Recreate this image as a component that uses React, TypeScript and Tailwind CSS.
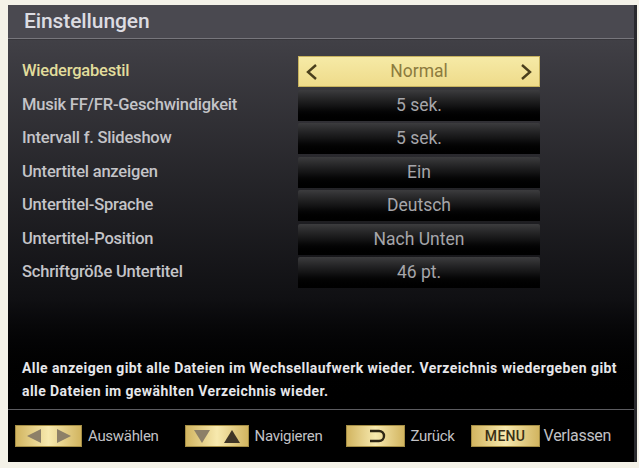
import React from "react";

const rows = [
  { label: "Wiedergabestil", value: "Normal", selected: true },
  { label: "Musik FF/FR-Geschwindigkeit", value: "5 sek." },
  { label: "Intervall f. Slideshow", value: "5 sek." },
  { label: "Untertitel anzeigen", value: "Ein" },
  { label: "Untertitel-Sprache", value: "Deutsch" },
  { label: "Untertitel-Position", value: "Nach Unten" },
  { label: "Schriftgröße Untertitel", value: "46 pt." },
];

const Key = ({ children, w }: { children: React.ReactNode; w: string }) => (
  <div
    className={`${w} h-[22px] flex items-center justify-center bg-gradient-to-r from-[#d2b560] via-[#f7e9ae] to-[#d2b560] border border-[#a48d45]`}
  >
    {children}
  </div>
);

export default function App() {
  return (
    <div
      className="w-[639px] h-[468px] bg-[#f4f2e8] pl-[8px] pt-[5px] overflow-hidden"
      style={{ fontFamily: "Roboto, 'Open Sans', sans-serif" }}
    >
      <div className="w-[629px] h-[457px] flex flex-col bg-black border-r-[3px] border-[#2a2a2e]">
        {/* Header */}
        <div className="h-[33px] bg-[#4a4950] flex items-center pl-[16px]">
          <span className="text-[21px] font-medium text-[#dcdce2] tracking-[-0.1px]">Einstellungen</span>
        </div>
        <div className="h-[1px] bg-[#77767c]" />
        <div className="h-[1px] bg-[#38373c]" />

        {/* Body */}
        <div className="flex-1 flex flex-col bg-gradient-to-b from-[#414046] via-[#101013] via-70% to-black">
          <div className="pt-[16px] flex flex-col gap-[2.5px]">
            {rows.map((r) => (
              <div key={r.label} className="flex items-center h-[31px]">
                <div
                  className={`w-[290px] pl-[14px] text-[16.5px] font-medium tracking-[-0.2px] ${
                    r.selected ? "text-[#e2dd9c]" : "text-[#c4c4c8]"
                  }`}
                >
                  {r.label}
                </div>
                {r.selected ? (
                  <div className="w-[242px] h-[31px] flex items-center justify-between px-[6px] bg-gradient-to-b from-[#f6eaa6] to-[#eedb8a] border border-[#c7b25e]">
                    <svg width="14" height="18" viewBox="0 0 14 18">
                      <path d="M11 2 L3 9 L11 16" fill="none" stroke="#4a3f1c" strokeWidth="2.4" />
                    </svg>
                    <span className="text-[17.5px] text-[#8c7b3e]">{r.value}</span>
                    <svg width="14" height="18" viewBox="0 0 14 18">
                      <path d="M3 2 L11 9 L3 16" fill="none" stroke="#4a3f1c" strokeWidth="2.4" />
                    </svg>
                  </div>
                ) : (
                  <div className="w-[242px] h-[31px] flex items-center justify-center rounded-t-[2px] bg-gradient-to-b from-[#3c3c3e] via-[#141415] to-black">
                    <span className="text-[17.5px] text-[#a6a6aa]">{r.value}</span>
                  </div>
                )}
              </div>
            ))}
          </div>

          <div className="flex-1" />

          <div className="pl-[14px] pr-[4px] pb-[6px] text-[14px] font-bold leading-[23px] text-[#e6e6ea] tracking-[0.42px]">
            Alle anzeigen gibt alle Dateien im Wechsellaufwerk wieder. Verzeichnis wiedergeben gibt alle Dateien im
            gewählten Verzeichnis wieder.
          </div>
        </div>

        <div className="h-[1px] bg-[#5c5c60]" />

        {/* Footer */}
        <div className="h-[52px] bg-black flex items-center pl-[7px] text-[15px] text-[#c2c2c6] tracking-[-0.3px]">
          <Key w="w-[67px]">
            <div className="flex items-center gap-[14px]">
              <svg width="16" height="14" viewBox="0 0 16 14">
                <path d="M1 7 L15 0 L15 14 Z" fill="#8d8068" />
              </svg>
              <svg width="16" height="14" viewBox="0 0 16 14">
                <path d="M15 7 L1 0 L1 14 Z" fill="#8d8068" />
              </svg>
            </div>
          </Key>
          <span className="ml-[6px]">Auswählen</span>
          <div className="ml-[26px]">
            <Key w="w-[64px]">
              <div className="flex items-center gap-[14px]">
                <svg width="16" height="13" viewBox="0 0 16 13">
                  <path d="M0 0 L16 0 L8 13 Z" fill="#8d8068" />
                </svg>
                <svg width="16" height="13" viewBox="0 0 16 13">
                  <path d="M8 0 L16 13 L0 13 Z" fill="#3f3526" />
                </svg>
              </div>
            </Key>
          </div>
          <span className="ml-[6px]">Navigieren</span>
          <div className="ml-[24px]">
            <Key w="w-[59px]">
              <svg width="22" height="14" viewBox="0 0 22 14">
                <path
                  d="M5 2 H14 A5 5 0 0 1 14 12 H5"
                  fill="none"
                  stroke="#2e2614"
                  strokeWidth="2.4"
                />
              </svg>
            </Key>
          </div>
          <span className="ml-[5px]">Zurück</span>
          <div className="ml-[16px]">
            <Key w="w-[69px]">
              <span className="text-[14px] font-medium text-[#3a3016] tracking-[0.3px]">MENU</span>
            </Key>
          </div>
          <span className="ml-[4px] text-[16px]">Verlassen</span>
        </div>
      </div>
    </div>
  );
}
